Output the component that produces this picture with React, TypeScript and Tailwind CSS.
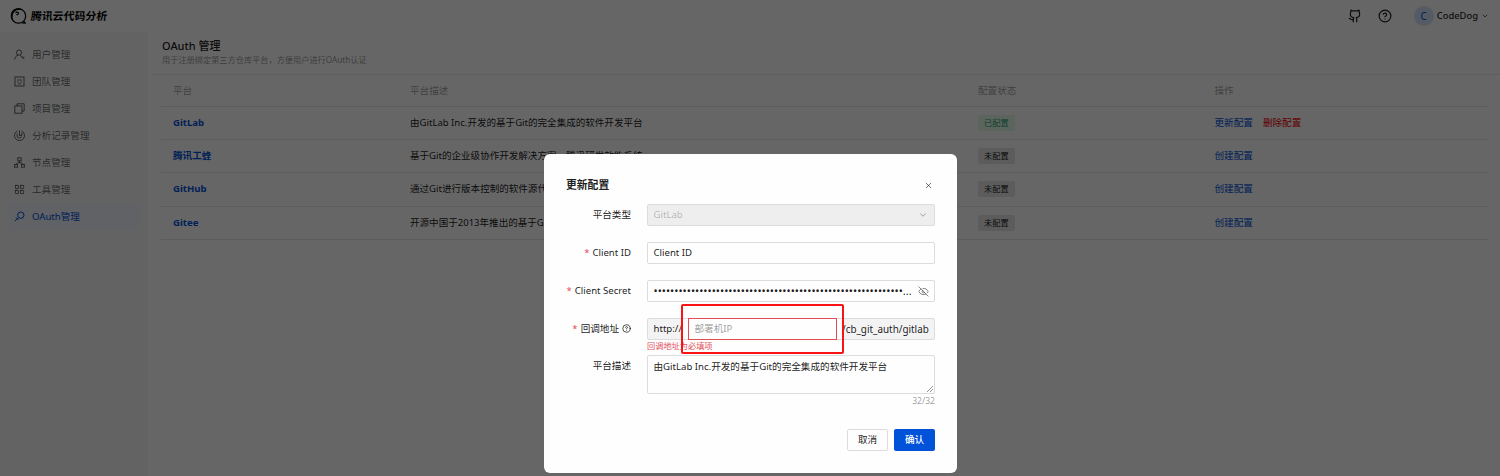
import React from "react";
import { LayoutGrid, Github, HelpCircle, ChevronDown, X, EyeOff } from "lucide-react";

function Glyph({ children }: { children: React.ReactNode }) {
  return (
    <svg width="11" height="11" viewBox="0 0 11 11" fill="none" stroke="currentColor" strokeWidth="1" className="shrink-0">
      {children}
    </svg>
  );
}

const menu = [
  {
    label: "用户管理",
    icon: (
      <Glyph>
        <circle cx="5" cy="3.600" r="2.600" />
        <path d="M.7 10.500C.9 8 2.200 6.800 4 6.300M6.300 6.300L9.800 10.300M8 8.200h2.500" />
      </Glyph>
    ),
  },
  {
    label: "团队管理",
    icon: (
      <Glyph>
        <rect x="1" y="1" width="9" height="9" />
        <path d="M3 4h5M3 6h1.500M6.500 6H8M4 7.800h3" strokeWidth=".9" />
      </Glyph>
    ),
  },
  {
    label: "项目管理",
    icon: (
      <Glyph>
        <rect x=".8" y="3" width="7.200" height="7.200" />
        <path d="M3 3V.8h7.200V8H8" />
      </Glyph>
    ),
  },
  {
    label: "分析记录管理",
    icon: (
      <Glyph>
        <path d="M3.500 1A5 5 0 1 0 7.500 1" />
        <path d="M5.500 .5V5.500H7.800V2.800M3.200 3.500v3.300c1.300 1.500 3.300 1.500 4.600 0" />
      </Glyph>
    ),
  },
  {
    label: "节点管理",
    icon: (
      <Glyph>
        <rect x="3.800" y=".8" width="3.400" height="3" />
        <rect x=".6" y="7.500" width="2.900" height="2.700" />
        <rect x="7.500" y="7.500" width="2.900" height="2.700" />
        <path d="M5.500 3.800v2M2 7.500L3.500 5.800h4L9 7.500" />
      </Glyph>
    ),
  },
  { label: "工具管理", icon: <LayoutGrid size={11} strokeWidth={2} /> },
  {
    label: "OAuth管理",
    icon: (
      <Glyph>
        <circle cx="6.800" cy="4.200" r="3.200" />
        <path d="M4.500 6.500L.8 10.200M2 6.500l2.500 2.500" />
      </Glyph>
    ),
    active: true,
  },
];

const rows = [
  { name: "GitLab", desc: "由GitLab Inc.开发的基于Git的完全集成的软件开发平台", done: true },
  { name: "腾讯工蜂", desc: "基于Git的企业级协作开发解决方案，腾讯研发效能系统", done: false },
  { name: "GitHub", desc: "通过Git进行版本控制的软件源代码托管服务平台", done: false },
  { name: "Gitee", desc: "开源中国于2013年推出的基于Git的代码托管平台", done: false },
];

function Logo() {
  return (
    <svg width="18" height="18" viewBox="0 0 18 18" fill="none">
      <circle cx="9.500" cy="9" r="7.200" stroke="#000" strokeWidth="1.200" />
      <path d="M2 9.500C1.500 4.500 5 1.300 9 1.200c2.500 0 4 .6 5 1.600C10.500 2.400 6.500 2.500 4.800 5.500 3.800 7.200 3.500 9 3.600 10.500c.2 2 1.200 3.500 2.500 5C4 14.500 2.300 12 2 9.500Z" fill="#000" />
      <path d="M6.500 6c.6-1.300 3-1.200 3 .3 0 1.200-1.300 1.700-2.200 1.200" stroke="#000" strokeWidth="1.100" />
      <path d="M12.500 16.500l3.500-2.500 1 2.800Z" fill="#000" />
    </svg>
  );
}

function Field({ label, required, className, children }: {
  label: React.ReactNode; required?: boolean; className: string; children: React.ReactNode;
}) {
  return (
    <div className={`flex ${className}`}>
      <div className="flex h-[21px] w-[87px] shrink-0 items-center justify-end gap-[3px]">
        {required && <span className="text-[#e34d59]">*</span>}
        {label}
      </div>
      <div className="ml-[16px] w-[288px]">{children}</div>
    </div>
  );
}

export default function App() {
  return (
    <div className="relative h-[476px] w-[1500px] overflow-hidden bg-white font-['Noto_Sans','Noto_Sans_CJK_SC',sans-serif] text-[9.6px] leading-[14px] text-black/90">
      <header className="flex h-8 items-center pl-[9px] pr-[11px]">
        <Logo />
        <span className="ml-[4px] -skew-x-6 text-[10.900px] font-bold text-black">腾讯云代码分析</span>
        <div className="ml-auto flex items-center">
          <Github size={14} strokeWidth={2} />
          <HelpCircle size={14} strokeWidth={2} className="ml-4" />
          <span className="ml-[22px] flex size-5 items-center justify-center rounded-full bg-[#d4e3fc] text-[10px] text-[#0052d9]">C</span>
          <span className="ml-[3px] text-[9.400px] font-medium">CodeDog</span>
          <ChevronDown size={8} className="ml-[3px]" />
        </div>
      </header>

      <div className="flex h-[444px]">
        <nav className="w-[148px] shrink-0 bg-[#f7f8fa] pt-[9px]">
          {menu.map((m) => (
            <div
              key={m.label}
              className={`flex h-[27px] items-center gap-[7px] ${m.active ? "mx-[9px] bg-[#f0f4ff] pl-[5px] text-[#0052d9]" : "pl-[14px] text-black/60"}`}
            >
              {m.icon}
              <span className="pt-px">{m.label}</span>
            </div>
          ))}
        </nav>

        <main className="flex-1 pl-[5px]">
          <div className="h-[43px] border-b border-[#ececec] pl-[9px] pt-[7px]">
            <h1 className="text-[11px] font-medium leading-[14px]">OAuth 管理</h1>
            <p className="text-[8.2px] leading-[14px] text-black/45">用于注册绑定第三方仓库平台，方便用户进行OAuth认证</p>
          </div>
          <div className="ml-[8px] mr-[12px]">
            <div className="grid h-[32px] grid-cols-[237px_568px_236.500px_1fr] items-center border-b border-[#e7e7e7] pl-[12px] text-black/40">
              <span>平台</span>
              <span>平台描述</span>
              <span>配置状态</span>
              <span>操作</span>
            </div>
            {rows.map((r) => (
              <div key={r.name} className="grid h-[33.200px] grid-cols-[237px_568px_236.500px_1fr] items-center border-b border-[#e7e7e7] pl-[12px]">
                <span className="font-bold text-[#0052d9]">{r.name}</span>
                <span className="text-[9.550px]">{r.desc}</span>
                <span>
                  <span className={`inline-block rounded-[2px] px-[6px] py-[1px] text-[8.2px] ${r.done ? "bg-[#e3f9e9] text-[#2ba471]" : "bg-[#e7e7e7]"}`}>
                    {r.done ? "已配置" : "未配置"}
                  </span>
                </span>
                <span className="flex gap-[10px] text-[#0052d9]">
                  {r.done ? "更新配置" : "创建配置"}
                  {r.done && <span className="text-[#f00000]">删除配置</span>}
                </span>
              </div>
            ))}
          </div>
        </main>
      </div>

      <div className="absolute inset-0 bg-black/60" />

      <div className="absolute left-[544px] top-[154px] h-[319px] w-[413px] rounded-[6px] bg-[#fefefe]">
        <div className="flex h-[50px] items-center justify-between pl-[22px] pr-[24px] pt-[12px]">
          <h2 className="text-[10.800px] font-bold">更新配置</h2>
          <X size={9} strokeWidth={2.500} className="text-black/60" />
        </div>
        <Field label="平台类型" className="h-[38px]">
          <div className="flex h-[22px] items-center justify-between rounded-[2px] border border-[#dcdcdc] bg-[#eeeeee] pl-[5.500px] pr-[6px] pb-px text-black/26">
            GitLab
            <ChevronDown size={10} className="text-black/40" />
          </div>
        </Field>
        <Field label="Client ID" required className="h-[38px]">
          <div className="flex h-[22px] items-center rounded-[2px] border border-[#dcdcdc] px-[5.500px] pb-px">Client ID</div>
        </Field>
        <Field label="Client Secret" required className="h-[38px]">
          <div className="flex h-[22px] items-center justify-between rounded-[2px] border border-[#dcdcdc] px-[5.500px]">
            <span className="whitespace-nowrap text-[11px] tracking-[0.020px]">{"•".repeat(60)}...</span>
            <EyeOff size={11} className="shrink-0 text-black/50" />
          </div>
        </Field>
        <Field label={<>回调地址<HelpCircle size={9} /></>} required className="h-[37px]">
          <div className="flex h-[22px] rounded-[2px] border border-[#dcdcdc] bg-[#f3f3f3] pb-px">
            <span className="flex w-[34px] items-center pl-[5.500px]">http://</span>
            <span className="-mb-px w-[160px] bg-[#fefefe]" />
            <span className="flex flex-1 items-center text-[9.900px]">/cb_git_auth/gitlab</span>
          </div>
          <p className="text-[8.2px] leading-[12px] text-[#e34d59]">回调地址为必填项</p>
        </Field>
        <Field label="平台描述" className="h-[58px]">
          <div className="relative h-[39px] rounded-[2px] border border-[#dcdcdc] px-[5.500px] pt-[4px]">
            由GitLab Inc.开发的基于Git的完全集成的软件开发平台
            <svg className="absolute bottom-0 right-0" width="8" height="8" stroke="#777" strokeWidth=".8">
              <path d="M1 7L7 1M4 7L7 4" />
            </svg>
          </div>
          <p className="text-right text-[8.600px] leading-[14px] text-black/40">32/32</p>
        </Field>
        <div className="flex justify-end gap-[6px] pr-[22px] pt-[16px]">
          <button className="h-[22px] w-[41px] rounded-[2px] border border-[#dcdcdc]">取消</button>
          <button className="h-[22px] w-[41px] rounded-[2px] bg-[#0052d9] font-medium text-white">确认</button>
        </div>
      </div>
      <div className="absolute left-[681px] top-[304px] h-[50px] w-[163px] rounded-[2px] border-2 border-[#f81414]">
        <div className="ml-[5px] mt-[12px] flex h-[22px] w-[149px] items-center border border-[#e34d59] bg-[#fefefe] px-[5.500px] pb-px text-black/40">部署机IP</div>
      </div>
    </div>
  );
}
